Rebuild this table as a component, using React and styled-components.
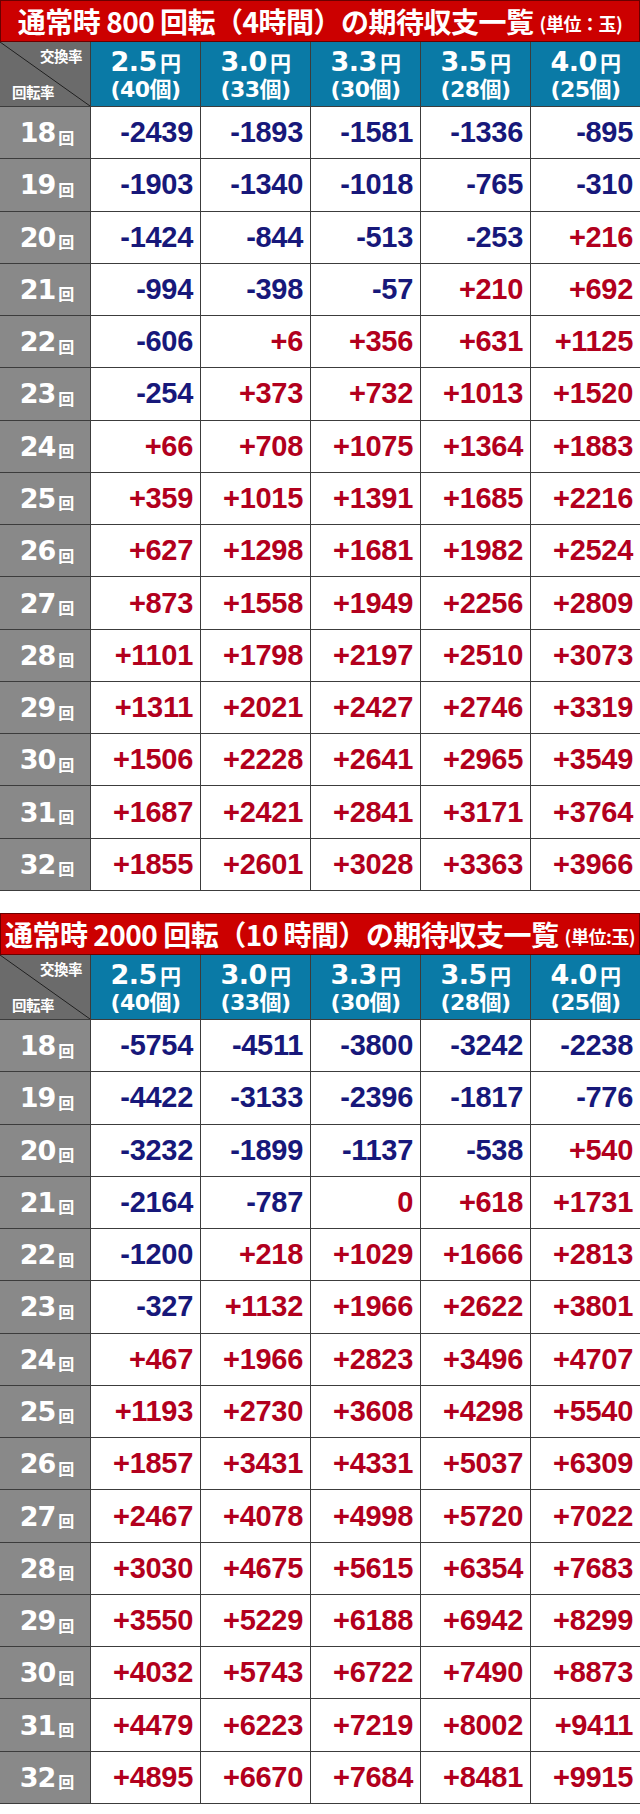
import React from "react";
import styled, { createGlobalStyle } from "styled-components";

const Global = createGlobalStyle`
  html, body { margin: 0; padding: 0; background: #fff; }
  body { font-family: "Liberation Sans", "Noto Sans CJK JP", sans-serif; }
`;

const Page = styled.div`
  width: 640px;
  display: flex;
  flex-direction: column;
  gap: 22px;
`;

const Table = styled.section`
  display: flex;
  flex-direction: column;
`;

const Title = styled.h2`
  margin: 0;
  height: 42px;
  box-sizing: border-box;
  background: #cc0000;
  border: 1px solid #6a0000;
  color: #fff;
  display: flex;
  align-items: center;
  justify-content: center;
  font-family: "Noto Sans CJK JP", sans-serif;
  font-weight: 700;
  font-size: 28px;
  letter-spacing: -0.5px;
  white-space: nowrap;
`;

const TitleSmall = styled.span`
  font-size: 18px;
  margin-left: 6px;
  margin-top: 3px;
  letter-spacing: -0.5px;
`;

const Grid = styled.div`
  display: grid;
  grid-template-columns: 90px repeat(5, 1fr);
  grid-template-rows: 64px repeat(15, 1fr);
  gap: 1px;
  height: 848px;
  background: #3c3c3c;
  border-bottom: 1px solid #3c3c3c;
`;

const Corner = styled.div`
  background: linear-gradient(
    to top right,
    #6b6b6b calc(50% - 0.8px),
    #1e1e1e 50%,
    #6b6b6b calc(50% + 0.8px)
  );
  display: flex;
  flex-direction: column;
  justify-content: space-between;
  padding: 6px 8px 6px 12px;
  color: #fff;
  font-family: "Noto Sans CJK JP", sans-serif;
  font-weight: 700;
  font-size: 14.5px;
  line-height: 16px;
  letter-spacing: -0.5px;
`;

const CornerTop = styled.span`
  align-self: flex-end;
`;

const CornerBottom = styled.span`
  align-self: flex-start;
`;

const Rate = styled.div`
  background: #0a7aa6;
  color: #fff;
  display: flex;
  flex-direction: column;
  align-items: center;
  justify-content: center;
  gap: 5px;
  padding-top: 3px;
  font-weight: 700;
`;

const RateMain = styled.div`
  display: flex;
  align-items: baseline;
  font-family: "DejaVu Sans", sans-serif;
  font-size: 27px;
  line-height: 24px;
  letter-spacing: -0.5px;
`;

const Yen = styled.span`
  font-family: "Noto Sans CJK JP", sans-serif;
  font-size: 21px;
  margin-left: 3px;
`;

const RateSub = styled.div`
  font-family: "DejaVu Sans", "Noto Sans CJK JP", sans-serif;
  font-size: 22px;
  line-height: 22px;
  letter-spacing: -0.5px;
`;

const RowLabel = styled.div`
  background: #898989;
  color: #fff;
  display: flex;
  align-items: center;
  justify-content: center;
  gap: 3px;
  padding-left: 4px;
  font-weight: 700;
`;

const LabelNum = styled.span`
  font-family: "DejaVu Sans", sans-serif;
  font-size: 27px;
  line-height: 1;
  letter-spacing: -1px;
`;

const LabelUnit = styled.span`
  font-family: "Noto Sans CJK JP", sans-serif;
  font-size: 16px;
  margin-top: 8px;
`;

const Cell = styled.div`
  background: #fff;
  display: flex;
  align-items: center;
  justify-content: flex-end;
  padding-right: 7px;
  font-family: "Liberation Sans", sans-serif;
  font-weight: 700;
  font-size: 29px;
  letter-spacing: -0.3px;
  color: ${(p) => (p.$neg ? "#17187a" : "#b2001d")};
`;

const rates = [
  ["2.5", "40"],
  ["3.0", "33"],
  ["3.3", "30"],
  ["3.5", "28"],
  ["4.0", "25"],
];

const table1 = [
  [-2439, -1893, -1581, -1336, -895],
  [-1903, -1340, -1018, -765, -310],
  [-1424, -844, -513, -253, 216],
  [-994, -398, -57, 210, 692],
  [-606, 6, 356, 631, 1125],
  [-254, 373, 732, 1013, 1520],
  [66, 708, 1075, 1364, 1883],
  [359, 1015, 1391, 1685, 2216],
  [627, 1298, 1681, 1982, 2524],
  [873, 1558, 1949, 2256, 2809],
  [1101, 1798, 2197, 2510, 3073],
  [1311, 2021, 2427, 2746, 3319],
  [1506, 2228, 2641, 2965, 3549],
  [1687, 2421, 2841, 3171, 3764],
  [1855, 2601, 3028, 3363, 3966],
];

const table2 = [
  [-5754, -4511, -3800, -3242, -2238],
  [-4422, -3133, -2396, -1817, -776],
  [-3232, -1899, -1137, -538, 540],
  [-2164, -787, 0, 618, 1731],
  [-1200, 218, 1029, 1666, 2813],
  [-327, 1132, 1966, 2622, 3801],
  [467, 1966, 2823, 3496, 4707],
  [1193, 2730, 3608, 4298, 5540],
  [1857, 3431, 4331, 5037, 6309],
  [2467, 4078, 4998, 5720, 7022],
  [3030, 4675, 5615, 6354, 7683],
  [3550, 5229, 6188, 6942, 8299],
  [4032, 5743, 6722, 7490, 8873],
  [4479, 6223, 7219, 8002, 9411],
  [4895, 6670, 7684, 8481, 9915],
];

const fmt = (v) => (v > 0 ? `+${v}` : `${v}`);

function Payout({ title, small, data }) {
  return (
    <Table>
      <Title>
        {title}
        <TitleSmall>{small}</TitleSmall>
      </Title>
      <Grid>
        <Corner>
          <CornerTop>交換率</CornerTop>
          <CornerBottom>回転率</CornerBottom>
        </Corner>
        {rates.map(([r, n]) => (
          <Rate key={r}>
            <RateMain>
              {r}
              <Yen>円</Yen>
            </RateMain>
            <RateSub>({n}個)</RateSub>
          </Rate>
        ))}
        {data.map((row, i) => (
          <React.Fragment key={i}>
            <RowLabel>
              <LabelNum>{18 + i}</LabelNum>
              <LabelUnit>回</LabelUnit>
            </RowLabel>
            {row.map((v, j) => (
              <Cell key={j} $neg={v < 0}>
                {fmt(v)}
              </Cell>
            ))}
          </React.Fragment>
        ))}
      </Grid>
    </Table>
  );
}

export default function App() {
  return (
    <>
      <Global />
      <Page>
        <Payout
          title="通常時 800 回転（4時間）の期待収支一覧"
          small="(単位：玉)"
          data={table1}
        />
        <Payout
          title="通常時 2000 回転（10 時間）の期待収支一覧"
          small="(単位:玉)"
          data={table2}
        />
      </Page>
    </>
  );
}
